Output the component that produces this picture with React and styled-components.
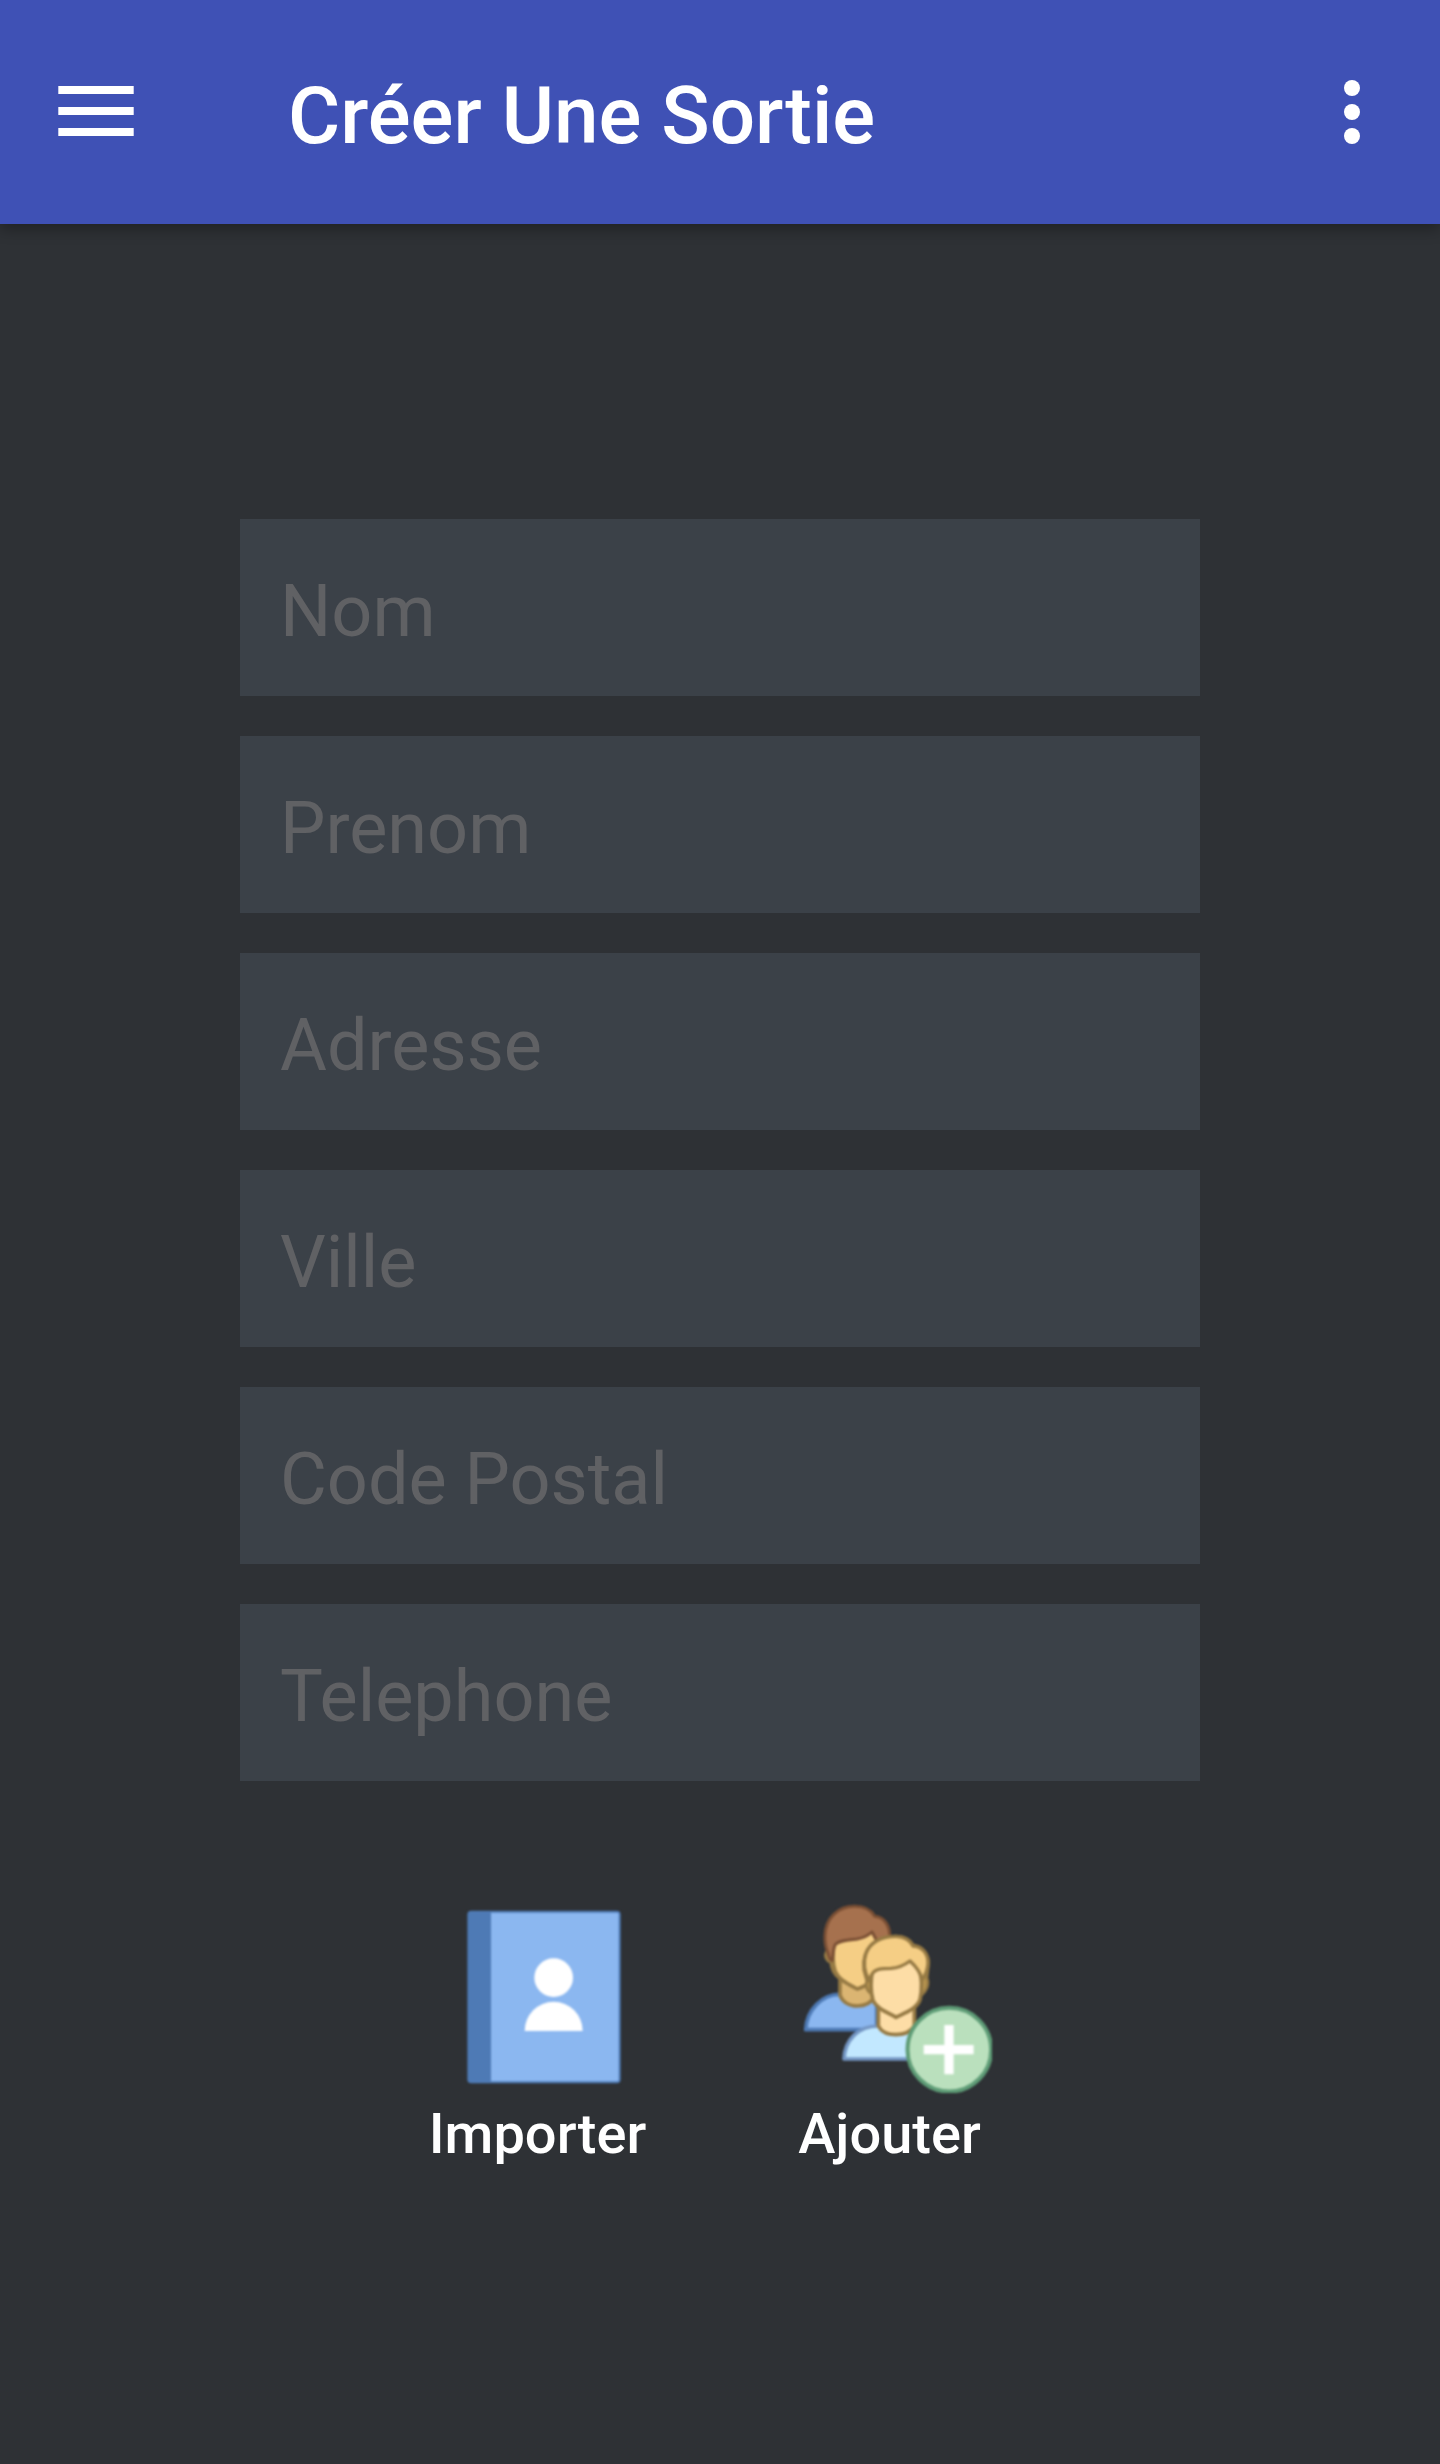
import React from "react";
import styled, { createGlobalStyle } from "styled-components";

const GlobalStyle = createGlobalStyle`
  * { box-sizing: border-box; }
  body { margin: 0; background: #2e3135; }
`;

const Screen = styled.div`
  display: flex;
  flex-direction: column;
  width: 1440px;
  height: 2464px;
  overflow: hidden;
  background: #2e3135;
  font-family: Roboto, "Noto Sans", sans-serif;
`;

const TopBar = styled.header`
  display: flex;
  align-items: flex-start;
  flex: none;
  height: 224px;
  background: #3f51b5;
  box-shadow: 0 5px 14px rgba(0, 0, 0, 0.32);
`;

const IconButton = styled.button`
  display: block;
  flex: none;
  width: 96px;
  height: 96px;
  padding: 0;
  border: 0;
  background: none;
  color: #fff;
  margin: ${(p) => p.$margin};
  svg { display: block; }
`;

const Title = styled.h1`
  flex: 1;
  margin: 69px 0 0;
  color: #fff;
  font-size: 80px;
  font-weight: 500;
  line-height: 94px;
  white-space: nowrap;
`;

const Form = styled.form`
  display: flex;
  flex-direction: column;
  gap: 40px;
  width: 960px;
  margin: 295px auto 0;
`;

const Field = styled.input`
  display: block;
  width: 100%;
  height: 177px;
  padding: 7px 40px 0;
  border: 0;
  border-radius: 0;
  outline: 0;
  background: #3b4148;
  color: #fff;
  font-family: inherit;
  font-size: 72px;
  font-weight: 400;
  &::placeholder { color: #606164; opacity: 1; }
`;

const Actions = styled.div`
  display: grid;
  grid-template-columns: 352px 352px;
  justify-content: center;
  margin-top: 120px;
`;

const Action = styled.button`
  display: flex;
  flex-direction: column;
  align-items: center;
  gap: 8px;
  padding: 0;
  border: 0;
  background: none;
  font-family: inherit;
`;

const ActionImage = styled.svg`
  display: block;
  width: 192px;
  height: 192px;
  filter: blur(0.8px);
`;

const ActionLabel = styled.span`
  padding-right: 13px;
  color: #fff;
  font-size: 56px;
  font-weight: 500;
  line-height: 66px;
`;

const MenuIcon = () => (
  <svg width="96" height="96" viewBox="0 0 96 96" fill="currentColor">
    <rect x="10.3" y="23" width="75.4" height="8" />
    <rect x="10.3" y="44" width="75.4" height="8" />
    <rect x="10.3" y="65" width="75.4" height="8" />
  </svg>
);

const MoreIcon = () => (
  <svg width="96" height="96" viewBox="0 0 96 96" fill="currentColor">
    <circle cx="48" cy="24" r="8" />
    <circle cx="48" cy="48" r="8" />
    <circle cx="48" cy="72" r="8" />
  </svg>
);

const ContactBookIcon = () => (
  <ActionImage viewBox="24 63 576 576">
    <rect x="82" y="92" width="460" height="518" rx="12" fill="#4e7ab5" />
    <path d="M153 98H532Q536 98 536 102V600Q536 604 532 604H153Z" fill="#8bb7f0" />
    <circle cx="341" cy="293" r="58" fill="#fff" />
    <path d="M254 453A87 88 0 0 1 428 453Z" fill="#fff" />
  </ActionImage>
);

const AddPeopleIcon = () => (
  <ActionImage viewBox="60 63 576 576">
    <g strokeLinejoin="round">
      <path d="M77 449C80 388 128 343 178 343H290V449Z" fill="#8bb7f0" stroke="#4e7ab5" strokeWidth="11" />
      <path d="M180 290V346C188 366 208 378 232 378C256 378 274 368 284 350V290Z" fill="#dbb572" stroke="#967a44" strokeWidth="11" />
      <path d="M139 215C132 228 138 242 152 247C154 270 164 284 176 294L172 205Z" fill="#dbb065" stroke="#967a44" strokeWidth="8" />
      <path d="M161 190C158 215 158 250 165 272C176 300 204 312 232 327C258 318 290 302 298 270V150H230Z" fill="#f5ce85" stroke="#967a44" strokeWidth="11" />
      <path d="M156 242C148 238 145 231 144 219C137 203 134 188 135 166C137 114 174 79 224 79C254 79 274 91 284 109C309 110 328 133 329 164L332 200H300L276 156C264 167 250 174 232 177C204 180 181 180 166 193C159 207 160 226 156 242Z" fill="#a6714e" stroke="#7a4f34" strokeWidth="9" />

      <path d="M192 537C194 482 232 438 296 438H400C446 440 490 480 495 537Z" fill="#c2e8ff" stroke="#7496c4" strokeWidth="11" />
      <path d="M295 374V438C304 456 324 464 348 464C372 464 392 456 403 438V374Z" fill="#fddda6" stroke="#967a44" strokeWidth="11" />
      <path d="M277 342C262 337 254 318 260 302L251 270C243 205 286 168 348 168C371 168 390 177 400 195C428 198 446 224 446 250L441 294C449 312 440 332 426 344Z" fill="#b89550" stroke="#967a44" strokeWidth="8" />
      <path d="M277 275C272 298 271 336 279 361C289 385 322 397 348 412C376 398 411 386 420 359C427 330 426 290 417 270L390 232L320 245Z" fill="#fddda6" stroke="#967a44" strokeWidth="11" />
      <path d="M267 302C254 278 249 247 258 220C270 187 306 168 349 169C372 170 390 180 399 198C428 199 444 222 444 247C444 269 437 284 427 299C422 280 412 263 390 243C371 257 355 264 333 265C308 265 285 265 275 284Z" fill="#f5ce85" stroke="#967a44" strokeWidth="10" />
    </g>
    <circle cx="508" cy="509" r="125.5" fill="#bae0bd" stroke="#5e9c76" strokeWidth="12" />
    <path d="M507 435V583M431 509H581" stroke="#fff" strokeWidth="28" />
  </ActionImage>
);

const fields = ["Nom", "Prenom", "Adresse", "Ville", "Code Postal", "Telephone"];

export default function App() {
  return (
    <>
      <GlobalStyle />
      <Screen>
        <TopBar>
          <IconButton aria-label="Menu" $margin="63px 144px 0 48px">
            <MenuIcon />
          </IconButton>
          <Title>Créer Une Sortie</Title>
          <IconButton aria-label="Options" $margin="64px 40px 0 0">
            <MoreIcon />
          </IconButton>
        </TopBar>
        <Form>
          {fields.map((name) => (
            <Field key={name} placeholder={name} aria-label={name} />
          ))}
        </Form>
        <Actions>
          <Action>
            <ContactBookIcon />
            <ActionLabel>Importer</ActionLabel>
          </Action>
          <Action>
            <AddPeopleIcon />
            <ActionLabel>Ajouter</ActionLabel>
          </Action>
        </Actions>
      </Screen>
    </>
  );
}
